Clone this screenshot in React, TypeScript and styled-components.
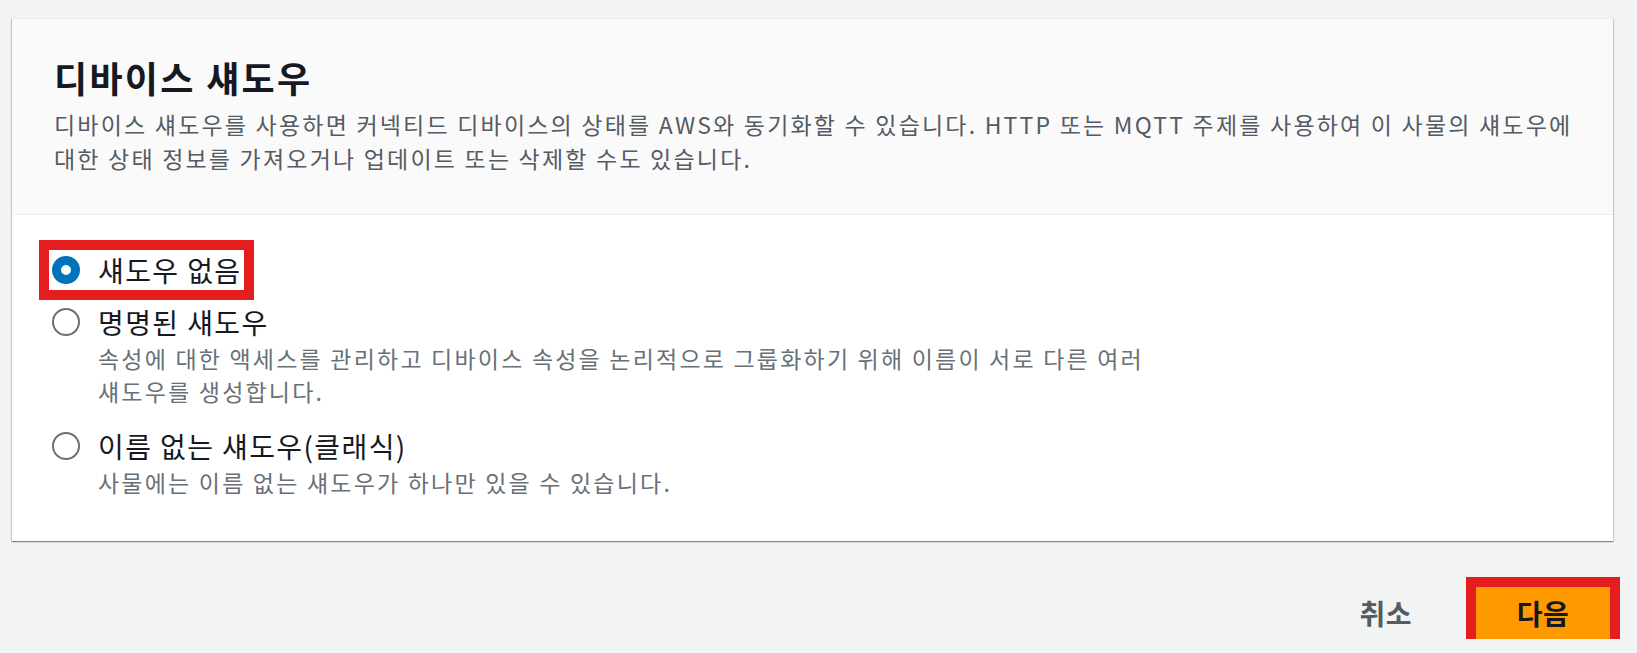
import styled, { createGlobalStyle } from "styled-components";

const GlobalStyle = createGlobalStyle`
  body {
    margin: 0;
    background: #f2f3f3;
    font-family: "Noto Sans CJK KR", "Noto Sans", sans-serif;
    word-break: keep-all;
  }
`;

const Page = styled.div`
  padding: 18px 24px 0 12px;
`;

const Card = styled.section`
  background: #ffffff;
  border-top: 1px solid #eaeded;
  box-shadow: 0 1px 1px 0 rgba(0, 28, 36, 0.3), 1px 1px 1px 0 rgba(0, 28, 36, 0.15),
    -1px 1px 1px 0 rgba(0, 28, 36, 0.15);
`;

const CardHeader = styled.div`
  background: #fafafa;
  border-bottom: 1px solid #eaeded;
  padding: 37px 20px 39px 42px;
`;

const Title = styled.h2`
  margin: 0;
  font-size: 36px;
  line-height: 43px;
  font-weight: 700;
  letter-spacing: 2.3px;
  color: #16191f;
`;

const HeaderDesc = styled.p`
  margin: 8px 0 0;
  font-size: 23px;
  line-height: 34px;
  letter-spacing: 2.2px;
  color: #545b64;
`;

const CardBody = styled.div`
  padding: 35px 40px 36px 40px;
  display: flex;
  flex-direction: column;
  gap: 12px;
`;

const Option = styled.div`
  display: flex;
  flex-direction: column;
`;

const Row = styled.label<{ $marked?: boolean }>`
  display: flex;
  align-items: center;
  gap: 18px;
  width: fit-content;
  font-size: 28px;
  line-height: 40px;
  letter-spacing: 1.4px;
  color: #16191f;
  cursor: pointer;
  ${({ $marked }) =>
    $marked &&
    `
    outline: 10px solid #e41e1e;
    padding: 0 3px;
    margin-left: -3px;
  `}
`;

const RadioMark = styled.span<{ $checked?: boolean }>`
  flex: none;
  box-sizing: border-box;
  width: 28px;
  height: 28px;
  border-radius: 50%;
  background: #ffffff;
  border: ${({ $checked }) => ($checked ? "9px solid #0073bb" : "2px solid #687078")};
`;

const OptionDesc = styled.p`
  margin: 0 0 0 46px;
  padding-bottom: 6px;
  max-width: 1100px;
  font-size: 23px;
  line-height: 33px;
  letter-spacing: 2.2px;
  color: #687078;
`;

const Footer = styled.div`
  display: flex;
  justify-content: flex-end;
  align-items: center;
  gap: 44px;
  padding: 46px 3px 0 0;
`;

const CancelButton = styled.button`
  background: transparent;
  border: none;
  padding: 0 20px;
  font-family: inherit;
  font-size: 28px;
  font-weight: 700;
  letter-spacing: 0.5px;
  color: #545b64;
  cursor: pointer;
`;

const PrimaryButton = styled.button`
  box-sizing: border-box;
  flex: none;
  width: 134px;
  height: 52px;
  padding: 0;
  background: #ff9900;
  border: none;
  border-radius: 0;
  outline: 10px solid #e41e1e;
  font-family: inherit;
  font-size: 28px;
  line-height: 52px;
  font-weight: 700;
  letter-spacing: 0.5px;
  color: #16191f;
  cursor: pointer;
`;

const options = [
  { label: "섀도우 없음", checked: true, desc: "" },
  {
    label: "명명된 섀도우",
    checked: false,
    desc: "속성에 대한 액세스를 관리하고 디바이스 속성을 논리적으로 그룹화하기 위해 이름이 서로 다른 여러 섀도우를 생성합니다.",
  },
  {
    label: "이름 없는 섀도우(클래식)",
    checked: false,
    desc: "사물에는 이름 없는 섀도우가 하나만 있을 수 있습니다.",
  },
];

const App = () => {
  return (
    <Page>
      <GlobalStyle />
      <Card>
        <CardHeader>
          <Title>디바이스 섀도우</Title>
          <HeaderDesc>
            디바이스 섀도우를 사용하면 커넥티드 디바이스의 상태를 AWS와 동기화할 수 있습니다. HTTP 또는 MQTT 주제를 사용하여 이 사물의 섀도우에 대한 상태 정보를 가져오거나 업데이트 또는 삭제할 수도 있습니다.
          </HeaderDesc>
        </CardHeader>
        <CardBody>
          {options.map((opt) => (
            <Option key={opt.label}>
              <Row $marked={opt.checked}>
                <RadioMark $checked={opt.checked} />
                <span>{opt.label}</span>
              </Row>
              {opt.desc && <OptionDesc>{opt.desc}</OptionDesc>}
            </Option>
          ))}
        </CardBody>
      </Card>
      <Footer>
        <CancelButton>취소</CancelButton>
        <PrimaryButton>다음</PrimaryButton>
      </Footer>
    </Page>
  );
};

export default App;
